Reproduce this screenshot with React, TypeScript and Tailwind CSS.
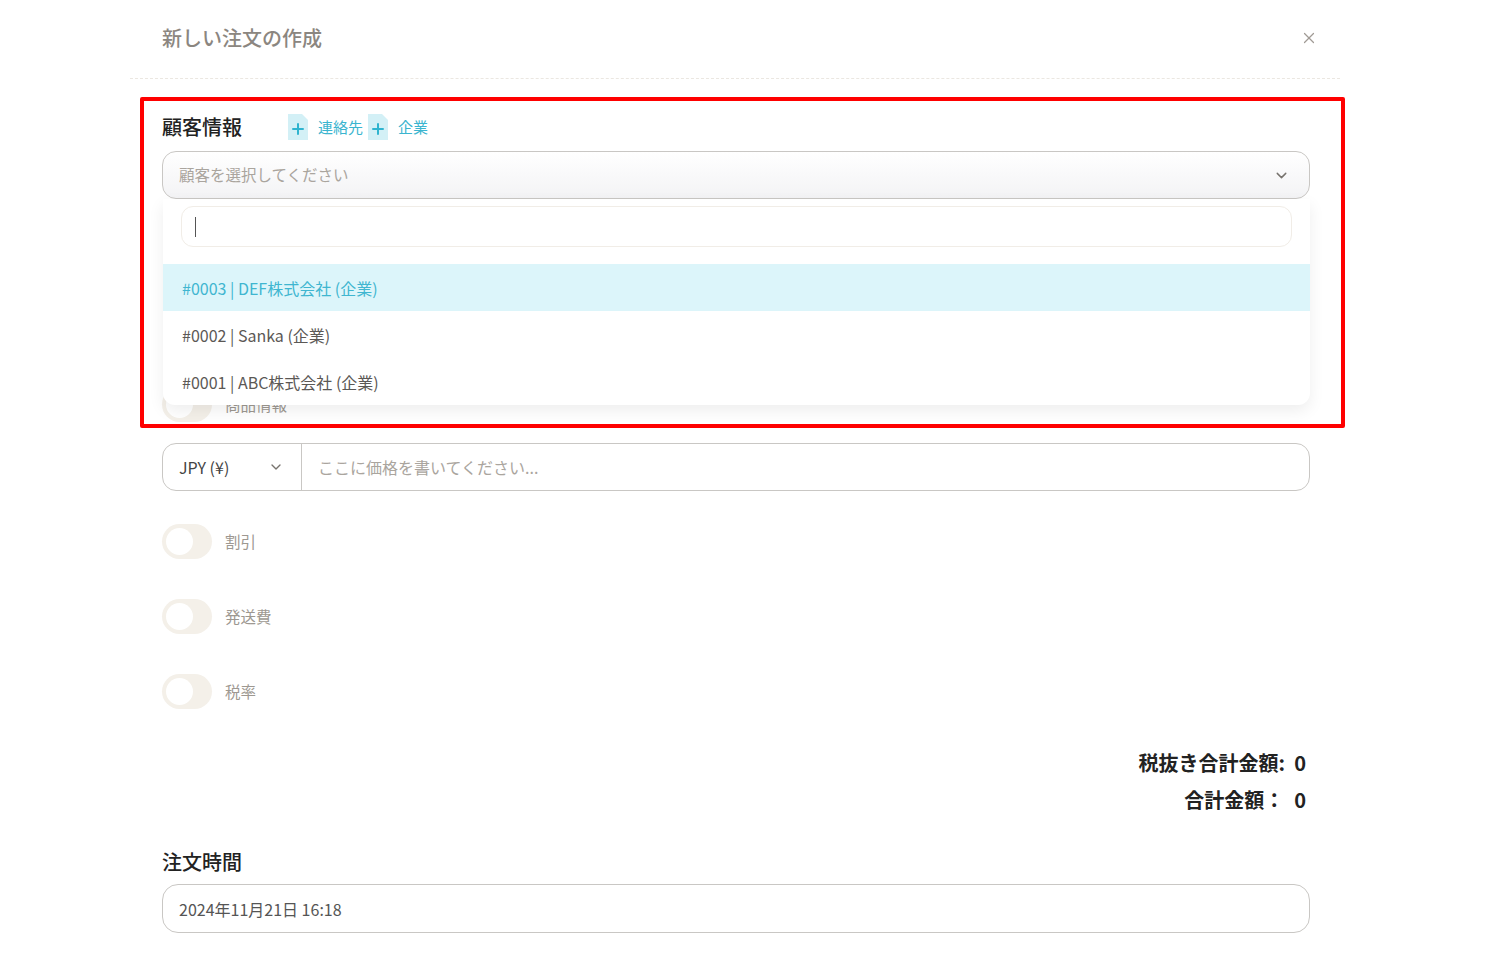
import { ChevronDown, X } from "lucide-react";

const font = { fontFamily: '"Noto Sans CJK JP", "Noto Sans", sans-serif' };

function PlusTile() {
  return (
    <svg width="20" height="26" viewBox="0 0 20 26" className="shrink-0">
      <path d="M0 0 H14 L20 6 V26 H0 Z" fill="#d3f0f6" />
      <path d="M10 10 V20 M5 15 H15" stroke="#2fb4cf" strokeWidth="2" strokeLinecap="round" />
    </svg>
  );
}

function Toggle({ label }: { label: string }) {
  return (
    <div className="flex items-center gap-[13px]">
      <div className="flex h-[35px] w-[50px] items-center rounded-full bg-[#f4f0e9] px-[4px]">
        <div className="h-[27px] w-[27px] rounded-full bg-white" />
      </div>
      <span className="text-[15.5px] text-[#9d9891]">{label}</span>
    </div>
  );
}

const options = [
  { id: "#0003", name: "DEF株式会社", active: true },
  { id: "#0002", name: "Sanka", active: false },
  { id: "#0001", name: "ABC株式会社", active: false },
];

export default function App() {
  return (
    <div className="relative min-h-[971px] bg-white" style={font}>
      <div className="ml-[130px] w-[1210px]">
        <div className="flex h-[79px] items-center justify-between border-b border-dashed border-[#ebe7e1] pl-[32px] pr-[22px]">
          <h2 className="-mt-[2px] text-[20px] font-medium text-[#8b8680]">新しい注文の作成</h2>
          <X size={18} strokeWidth={1.6} className="-mt-[2px] text-[#a09b95]" />
        </div>

        <div className="pl-[32px] pr-[30px]">
          <div className="mt-[35px] flex h-[26px] items-center">
            <span className="w-[126px] text-[20px] font-medium text-[#222]">顧客情報</span>
            <PlusTile />
            <span className="ml-[10px] text-[15px] text-[#3bb5cf]">連絡先</span>
            <span className="ml-[5px]"><PlusTile /></span>
            <span className="ml-[10px] text-[15px] text-[#3bb5cf]">企業</span>
          </div>

          <div className="relative mt-[11px]">
            <div className="flex h-[48px] items-center justify-between rounded-[14px] border border-[#c9c7c4] bg-gradient-to-b from-white to-[#f3f3f5] pl-[16px] pr-[19px]">
              <span className="text-[15.5px] text-[#aaa59e]">顧客を選択してください</span>
              <ChevronDown size={17} strokeWidth={2} className="text-[#77736e]" />
            </div>

            <div className="absolute left-[1px] right-0 top-full z-10 rounded-b-[12px] bg-white pt-[7px] shadow-[0_6px_16px_rgba(0,0,0,0.07)]">
              <div className="mx-[18px] flex h-[41px] items-center rounded-[12px] border border-[#f1ede7] px-[13px]">
                <div className="h-[20px] w-px bg-[#555]" />
              </div>
              <div className="mt-[17px]">
                {options.map((o) => (
                  <div
                    key={o.id}
                    className={
                      o.active
                        ? "flex h-[47px] items-center bg-[#dcf5fa] px-[19px] text-[16px] text-[#3fb6d0]"
                        : "flex h-[47px] items-center px-[19px] text-[16px] text-[#5b5855]"
                    }
                  >
                    {o.id} | {o.name} (企業)
                  </div>
                ))}
              </div>
            </div>
          </div>

          <div className="mt-[188px]">
            <Toggle label="商品情報" />
          </div>

          <div className="mt-[21px] flex h-[48px] rounded-[14px] border border-[#c9c7c4]">
            <div className="flex w-[139px] items-center justify-between border-r border-[#c9c7c4] pl-[16px] pr-[17px]">
              <span className="text-[16px] text-[#444]">JPY (¥)</span>
              <ChevronDown size={16} strokeWidth={2} className="text-[#77736e]" />
            </div>
            <div className="flex flex-1 items-center pl-[16px]">
              <span className="text-[16px] text-[#aaa59e]">ここに価格を書いてください...</span>
            </div>
          </div>

          <div className="mt-[33px] flex flex-col gap-[40px]">
            <Toggle label="割引" />
            <Toggle label="発送費" />
            <Toggle label="税率" />
          </div>

          <div className="mt-[35px] flex flex-col items-end pr-[4px] text-[20px] font-bold text-[#222]">
            <div className="flex h-[37px] items-center">税抜き合計金額:&nbsp;&nbsp;0</div>
            <div className="flex h-[37px] items-center gap-[10px]">
              <span>合計金額：</span>
              <span>0</span>
            </div>
          </div>

          <div className="mt-[31px] flex h-[26px] items-center text-[20px] font-medium text-[#222]">注文時間</div>
          <div className="mt-[9px] flex h-[49px] items-center rounded-[16px] border border-[#c9c7c4] pl-[16px]">
            <span className="text-[16px] text-[#555]">2024年11月21日 16:18</span>
          </div>
        </div>
      </div>

      <div className="pointer-events-none absolute left-[140px] top-[97px] z-20 h-[331px] w-[1205px] rounded-[2px] border-[4px] border-[#ff0000]" />
    </div>
  );
}
